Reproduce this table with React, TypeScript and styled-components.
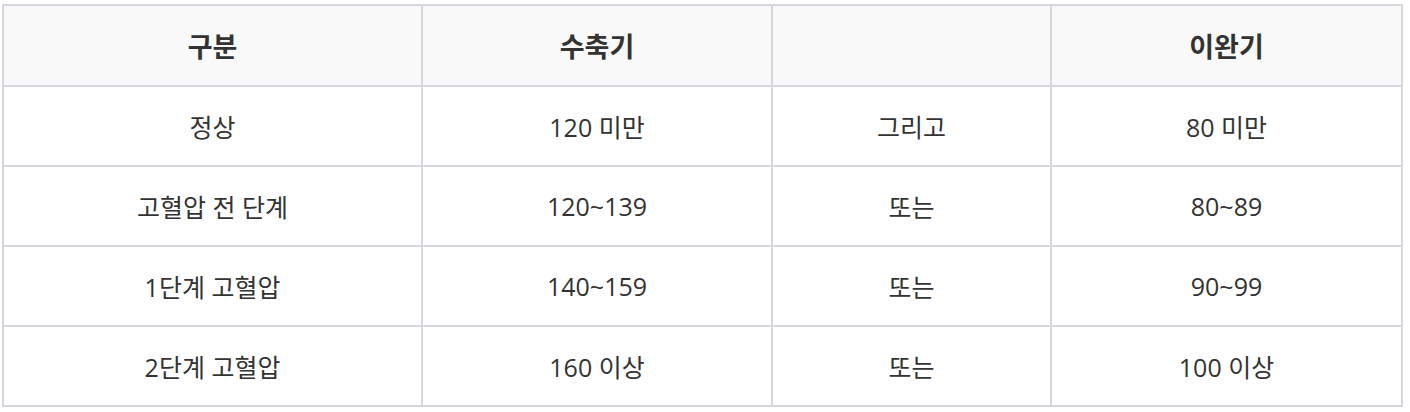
import React from 'react'
import styled, { createGlobalStyle } from 'styled-components'

const GlobalStyle = createGlobalStyle`
  html, body {
    margin: 0;
    padding: 0;
    background: #ffffff;
  }
  body {
    font-family: 'Open Sans', 'Noto Sans CJK KR', sans-serif;
  }
`

interface RowData {
  label: string
  systolic: string
  joiner: string
  diastolic: string
}

const rows: RowData[] = [
  { label: '정상', systolic: '120 미만', joiner: '그리고', diastolic: '80 미만' },
  { label: '고혈압 전 단계', systolic: '120~139', joiner: '또는', diastolic: '80~89' },
  { label: '1단계 고혈압', systolic: '140~159', joiner: '또는', diastolic: '90~99' },
  { label: '2단계 고혈압', systolic: '160 이상', joiner: '또는', diastolic: '100 이상' },
]

const App = (): JSX.Element => {
  return (
    <>
      <GlobalStyle />
      <Wrapper>
        <Table>
          <colgroup>
            <col style={{ width: 419 }} />
            <col style={{ width: 350 }} />
            <col style={{ width: 279 }} />
            <col style={{ width: 351 }} />
          </colgroup>
          <thead>
            <tr>
              <HeadCell>구분</HeadCell>
              <HeadCell>수축기</HeadCell>
              <HeadCell />
              <HeadCell>이완기</HeadCell>
            </tr>
          </thead>
          <tbody>
            {rows.map((row) => (
              <tr key={row.label}>
                <Cell>{row.label}</Cell>
                <Cell>{row.systolic}</Cell>
                <Cell>{row.joiner}</Cell>
                <Cell>{row.diastolic}</Cell>
              </tr>
            ))}
          </tbody>
        </Table>
      </Wrapper>
    </>
  )
}

const Wrapper = styled.div`
  padding: 4px 0 0 2px;
`

const Table = styled.table`
  width: 1400px;
  border-collapse: collapse;
  table-layout: fixed;
  border: 2px solid #d6d6dc;
`

const HeadCell = styled.th`
  height: 79px;
  padding: 0;
  background: #f9f9f9;
  border: 2px solid #d6d6dc;
  font-size: 27px;
  font-weight: 700;
  color: #333333;
  text-align: center;
  vertical-align: middle;
`

const Cell = styled.td`
  height: 78px;
  padding: 0;
  border: 2px solid #d6d6dc;
  font-size: 25px;
  font-weight: 400;
  color: #333333;
  text-align: center;
  vertical-align: middle;
`

export default App
